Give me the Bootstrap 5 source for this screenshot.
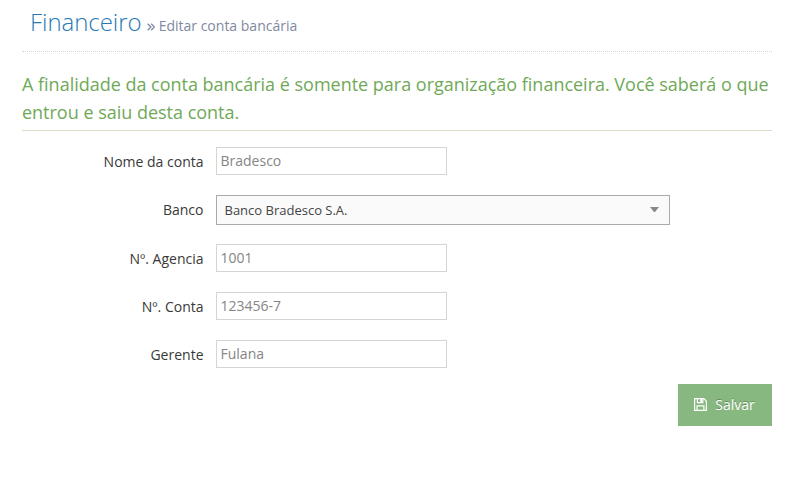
<!DOCTYPE html>
<html lang="pt-BR">
<head>
<meta charset="utf-8">
<meta name="viewport" content="width=device-width, initial-scale=1">
<title>Financeiro - Editar conta bancária</title>
<link href="https://cdn.jsdelivr.net/npm/bootstrap@5.3.0/dist/css/bootstrap.min.css" rel="stylesheet">
<style>
body { font-family: "Open Sans", sans-serif; font-size: 14px; line-height: 20px; color: #393939; background: #fff; }
.page { padding: 0 20px 0 22px; }
.page-title { height: 52px; padding: 6px 0 0 8px; border-bottom: 1px dotted #d6d6d6; }
.page-title h1 { font-size: 24px; font-weight: 300; line-height: 31px; letter-spacing: -.05px; color: #2679b5; }
.page-title small { font-size: 14px; font-weight: 400; letter-spacing: 0; color: #8089a0; }
.page-title svg { width: 8px; height: 8px; margin: 0 4px 0 -1px; }
.notice { font-size: 18px; font-weight: 400; line-height: 28px; letter-spacing: -.012px; color: #6fa958; margin: 18px 0 16px; padding-bottom: 4px; border-bottom: 1px solid #d8dec8; }
.field { margin-bottom: 20px; }
.field label { width: 181.5px; margin-right: 12.5px; padding-top: 5px; }
.field .form-control { width: 231px; height: 28px; padding: 2px 4px 4px 3.5px; font-size: 14px; line-height: 20px; color: #858585; border: 1px solid #d5d5d5; }
.bank-field { margin-bottom: 19px; }
.bank-select { width: 454px; height: 30px; padding: 0 10px 0 7.5px; font-size: 13px; color: #444; background: #fafafa; border: 1px solid #aaa; }
.bank-select svg { width: 9px; height: 5px; margin-bottom: 1px; }
.save-btn { width: 94px; height: 42px; margin-top: -4px; padding: 0 1px 2px 0; font-size: 14px; color: #fff; background: #87b87f; }
.save-btn:hover { color: #fff; background: #629b58; }
.save-btn span { text-shadow: 0 -1px 0 rgba(0,0,0,.25); }
</style>
</head>
<body>
<main class="page">
  <header class="page-title">
    <h1 class="m-0">Financeiro
      <small><svg viewBox="0 0 8 8" fill="none" stroke="currentColor" stroke-width="1.3"><path d="M.7.7 3.9 4 .7 7.3M4.2.7 7.4 4 4.2 7.3"/></svg>Editar conta bancária</small>
    </h1>
  </header>
  <h3 class="notice">A finalidade da conta bancária é somente para organização financeira. Você saberá o que entrou e saiu desta conta.</h3>
  <form>
    <div class="field d-flex">
      <label class="text-end" for="nome">Nome da conta</label>
      <input class="form-control rounded-0" id="nome" type="text" value="Bradesco">
    </div>
    <div class="field bank-field d-flex">
      <label class="text-end" for="banco">Banco</label>
      <button type="button" id="banco" class="bank-select d-flex align-items-center justify-content-between">
        <span>Banco Bradesco S.A.</span>
        <svg viewBox="0 0 9 5" fill="#888"><path d="M0 0h9L5 5H4z"/></svg>
      </button>
    </div>
    <div class="field d-flex">
      <label class="text-end" for="agencia">Nº. Agencia</label>
      <input class="form-control rounded-0" id="agencia" type="text" value="1001">
    </div>
    <div class="field d-flex">
      <label class="text-end" for="conta">Nº. Conta</label>
      <input class="form-control rounded-0" id="conta" type="text" value="123456-7">
    </div>
    <div class="field d-flex">
      <label class="text-end" for="gerente">Gerente</label>
      <input class="form-control rounded-0" id="gerente" type="text" value="Fulana">
    </div>
    <div class="d-flex justify-content-end">
      <button type="button" class="save-btn btn border-0 rounded-0 d-flex align-items-center justify-content-center">
        <svg class="me-2" width="13" height="13" viewBox="0 0 13 13" fill="none" stroke="#fff" stroke-width="1.2"><path d="M.6.6h9.2l2.6 2.6v9.2H.6zM3.4.6v4h5.4v-4M3.1 12.4V7.9h6.8v4.5"/><path d="M6.3 1h1.7v3H6.3z" fill="#fff" stroke="none"/></svg>
        <span>Salvar</span>
      </button>
    </div>
  </form>
</main>
<script src="https://cdn.jsdelivr.net/npm/bootstrap@5.3.0/dist/js/bootstrap.bundle.min.js"></script>
</body>
</html>
